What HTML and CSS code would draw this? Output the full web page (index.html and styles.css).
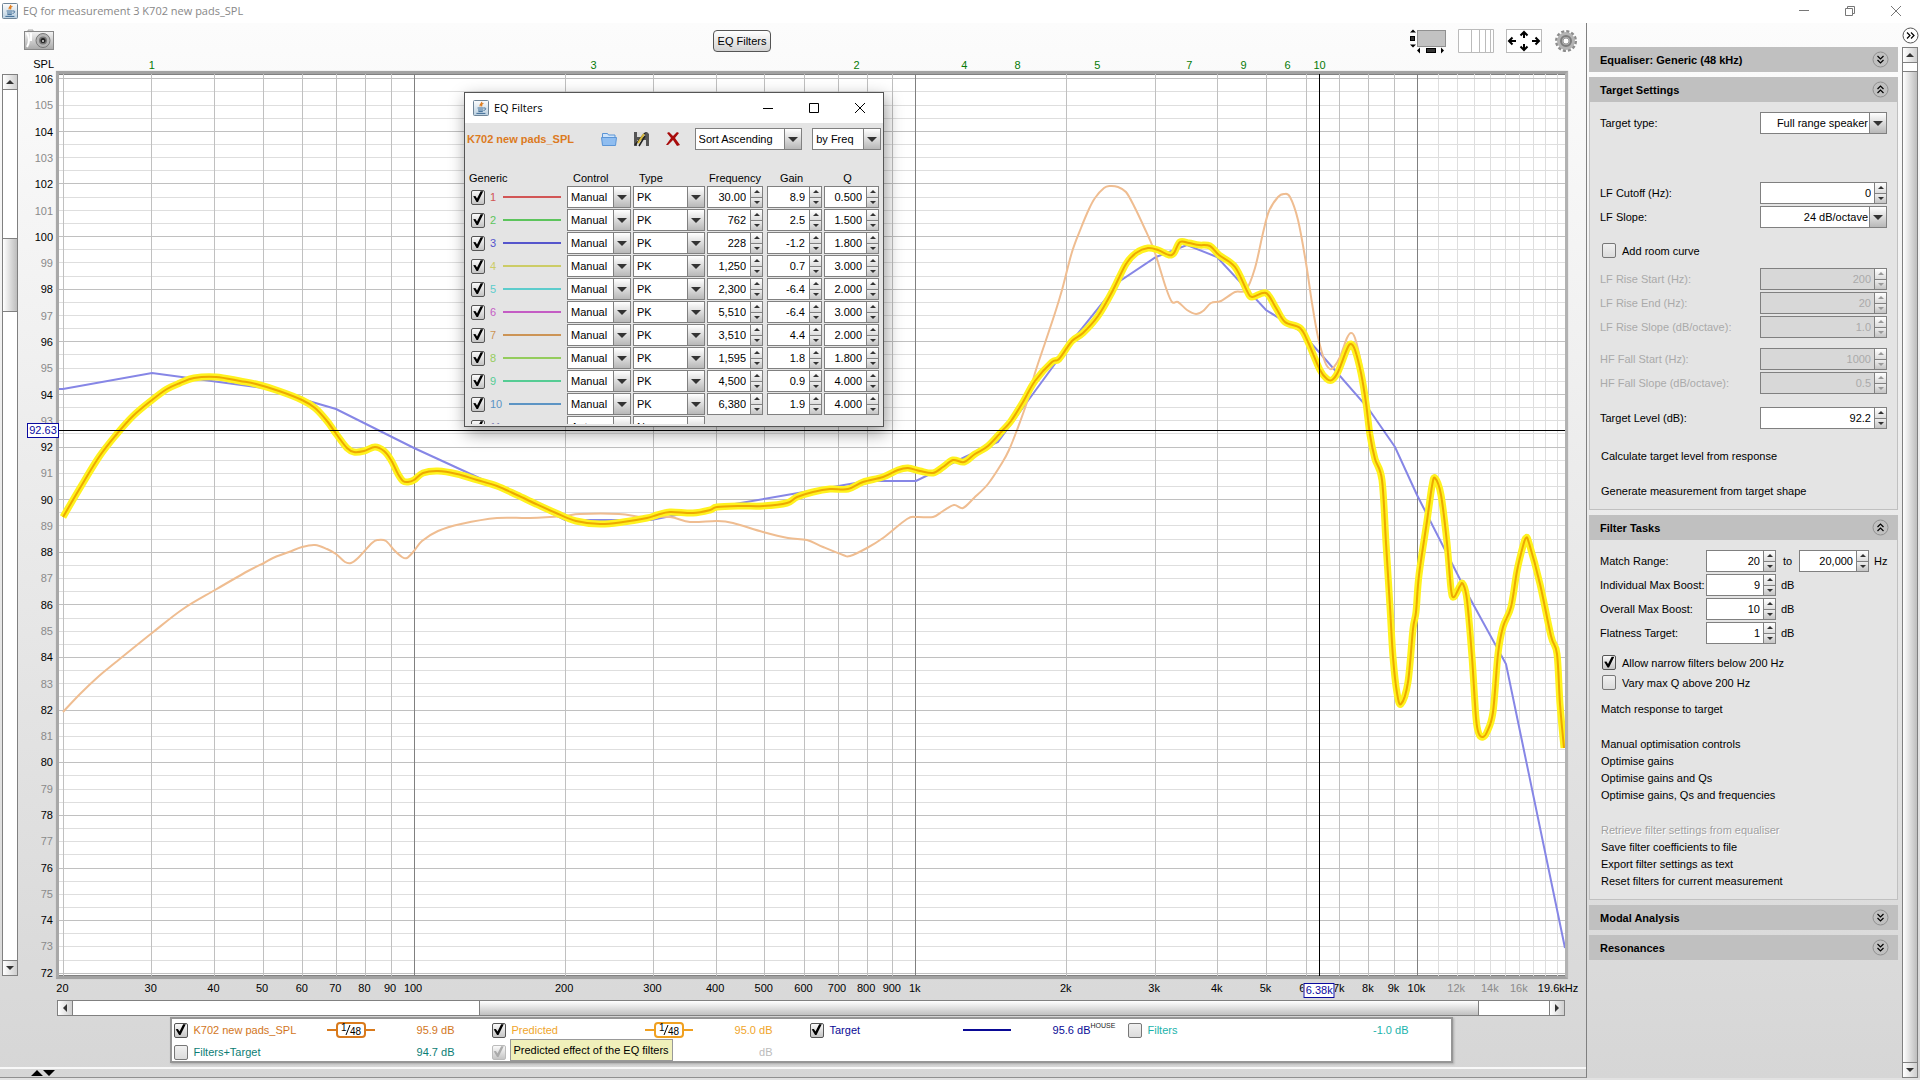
FILE: index.html
```html
<!DOCTYPE html>
<html lang="en">
<head>
<meta charset="utf-8">
<title>EQ for measurement 3 K702 new pads_SPL</title>
<link rel="stylesheet" href="styles.css">
</head>
<body>
<svg width="0" height="0" class="defs" aria-hidden="true">
  <defs>
    <linearGradient id="metal" x1="0" y1="0" x2="0" y2="1"><stop offset="0" stop-color="#f4f4f4"/><stop offset="1" stop-color="#a8a8a8"/></linearGradient>
    <linearGradient id="cupbg" x1="0" y1="0" x2="0" y2="1"><stop offset="0" stop-color="#fdfdfd"/><stop offset="1" stop-color="#b9cfe0"/></linearGradient>
    <symbol id="java" viewBox="0 0 16 16">
      <rect x=".5" y=".5" width="15" height="15" rx="1" fill="url(#cupbg)" stroke="#6f8598"/>
      <path d="M8.6 1.8c1 1.3-2.6 2.4-1.3 4.6M10.4 3.2c-2 1-2.2 1.8-1.4 3.2" fill="none" stroke="#e07b1a" stroke-width="1.2"/>
      <path d="M4.6 8h6.2M5 10h5.2M5.4 11.6h4.4M3.4 13.4h9M11 8c2.6-.5 2.2 2-.4 2.4" fill="none" stroke="#3f6c96"/>
    </symbol>
    <symbol id="down2" viewBox="0 0 17 17">
      <circle cx="8.5" cy="8.5" r="7.5" fill="none" stroke="#909090"/>
      <path d="M5.5 5l3 3 3-3M5.5 9l3 3 3-3" fill="none" stroke="#000" stroke-width="1.2"/>
    </symbol>
    <symbol id="up2" viewBox="0 0 17 17">
      <circle cx="8.5" cy="8.5" r="7.5" fill="none" stroke="#909090"/>
      <path d="M5.5 8l3-3 3 3M5.5 12l3-3 3 3" fill="none" stroke="#000" stroke-width="1.2"/>
    </symbol>
  </defs>
</svg>

<header class="titlebar">
  <svg class="app-icon" aria-hidden="true"><use href="#java"/></svg>
  <h1>EQ for measurement 3 K702 new pads_SPL</h1>
  <div class="window-buttons">
    <button type="button" aria-label="Minimise"><svg width="12" height="12"><path d="M1 5.5h10" stroke="#777"/></svg></button>
    <button type="button" aria-label="Restore"><svg width="12" height="12"><path d="M1.500 3.500h7v7h-7zM3.500 3.500v-2h7v7h-2" fill="none" stroke="#777"/></svg></button>
    <button type="button" aria-label="Close"><svg width="12" height="12"><path d="M1 1l10 10M11 1L1 11" stroke="#777"/></svg></button>
  </div>
</header>

<div class="workspace">
  <main class="graph-pane">
    <div class="toolbar">
      <button type="button" class="icon-button" aria-label="Capture graph">
        <svg width="32" height="24"><path d="M5 3V1h5v2" fill="#ddd" stroke="#aaa"/><rect x="1.500" y="2.500" width="29" height="18" fill="url(#metal)" stroke="#888"/><path d="M4 4q4 7 0 14M8 4v8" fill="none" stroke="#fff" stroke-width="2"/><circle cx="20" cy="11.500" r="7" fill="#b5b5b5" stroke="#777"/><circle cx="20" cy="11.500" r="4" fill="#777"/><circle cx="20" cy="11.500" r="2.500" fill="#222"/><circle cx="20" cy="12" r="1" fill="#ddd"/></svg>
      </button>
      <button type="button" class="eq-button">EQ Filters</button>
      <div class="view-buttons">
        <button type="button" class="icon-button" aria-label="Toggle scrollbars">
          <svg width="38" height="26"><rect x="8.500" y="2.500" width="28" height="16" fill="#c2c2c2" stroke="#909090"/><path d="M4 1.500l3 3H1zM4 19.500l3-3H1zM8 22.500l3-3v6zM35 22.500l-3-3v6z"/><rect x="1.500" y="8.500" width="4" height="4" fill="#333" stroke="#000"/><rect x="17.500" y="20.500" width="9" height="4" fill="#333" stroke="#000"/></svg>
        </button>
        <button type="button" class="icon-button" aria-label="Toggle frequency axis">
          <svg width="38" height="26"><path d="M1.500 1.500h35v23h-35zM14.500 2v23M22.500 2v23M28.500 2v23M33.500 2v23" fill="#fff" stroke="#bbb"/></svg>
        </button>
        <button type="button" class="icon-button" aria-label="Graph limits">
          <svg width="38" height="26"><rect x="1.500" y="1.500" width="35" height="23" fill="#fff" stroke="#bbb"/><path d="M19 10V4m-3.500 3.500L19 4l3.500 3.500M19 16v6m-3.500-3.500L19 22l3.500-3.500M11 13H4m3.500-3.500L4 13l3.500 3.500M27 13h7m-3.500-3.500L34 13l-3.500 3.500" fill="none" stroke="#000" stroke-width="2"/></svg>
        </button>
        <button type="button" class="icon-button" aria-label="Graph controls">
          <svg width="26" height="26"><circle cx="13" cy="13" r="9.500" fill="none" stroke="#8c8c8c" stroke-width="3" stroke-dasharray="3 1.970"/><circle cx="13" cy="13" r="6" fill="none" stroke="#b4b4b4" stroke-width="6"/><circle cx="13" cy="13" r="5" fill="none" stroke="#7d7d7d" stroke-width="2"/><circle cx="13" cy="13" r="3" fill="#fff" stroke="#999"/></svg>
        </button>
      </div>
    </div>

    <div class="graph">
      <div class="axis-name">SPL</div>
      <div class="filter-marks" id="filter-marks"></div>
      <div class="scroll scroll-v">
        <button type="button" class="arrow-up" aria-label="Scroll up"></button>
        <div class="rest rest-top"></div><div class="thumb thumb-v"></div><div class="rest"></div>
        <button type="button" class="arrow-down" aria-label="Scroll down"></button>
      </div>
      <div class="y-axis" id="y-axis"></div>
      <div class="plot">
        <svg id="chart" viewBox="59 74 1506 902" preserveAspectRatio="none" role="img" aria-label="SPL against frequency">
          <g id="grid"></g>
          <g id="curves"></g>
          <path class="cursor" d="M59 430.500H1565M1319.500 74V976"/>
        </svg>
        <output class="cursor-level">92.63</output>
        <output class="cursor-frequency" id="cursor-frequency">6.38k</output>
      </div>
      <div class="x-axis" id="x-axis"></div>
      <div class="scroll scroll-h">
        <button type="button" class="arrow-left" aria-label="Scroll left"></button>
        <div class="rest rest-left"></div><div class="thumb thumb-h"></div><div class="rest rest-right"></div>
        <button type="button" class="arrow-right" aria-label="Scroll right"></button>
      </div>
    </div>

    <div class="legend">
      <div class="trace orange"><input type="checkbox" id="t1" checked><label for="t1">K702 new pads_SPL</label><span class="smooth"><svg width="50" height="16"><path d="M1 8h10M39 8h10" stroke="#d97a1c" stroke-width="2"/><rect x="11" y="1" width="28" height="14" rx="3" fill="#fff" stroke="#d97a1c" stroke-width="2"/><path d="M20 13l4-10" stroke="#000"/><text x="15" y="9">1</text><text x="24" y="13">48</text></svg></span><output>95.9 dB</output></div>
      <div class="trace amber"><input type="checkbox" id="t2" checked><label for="t2">Predicted</label><span class="smooth"><svg width="50" height="16"><path d="M1 8h10M39 8h10" stroke="#f0a020" stroke-width="2"/><rect x="11" y="1" width="28" height="14" rx="3" fill="#fff" stroke="#f0a020" stroke-width="2"/><path d="M20 13l4-10" stroke="#000"/><text x="15" y="9">1</text><text x="24" y="13">48</text></svg></span><output>95.0 dB</output></div>
      <div class="trace navy"><input type="checkbox" id="t3" checked><label for="t3">Target</label><span class="smooth"><svg width="50" height="16"><path d="M1 8h48" stroke="#0a0a96" stroke-width="2"/></svg></span><output>95.6 dB</output><sup>HOUSE</sup></div>
      <div class="trace cyan"><input type="checkbox" id="t4"><label for="t4">Filters</label><output>-1.0 dB</output></div>
      <div class="trace teal"><input type="checkbox" id="t5"><label for="t5">Filters+Target</label><output>94.7 dB</output></div>
      <div class="trace off"><input type="checkbox" id="t6" checked disabled aria-label="Unused trace"><output>dB</output><div class="tip" role="tooltip">Predicted effect of the EQ filters</div></div>
    </div>
    <div class="splitter"><button type="button" aria-label="Collapse or expand"><svg width="24" height="8"><path d="M0 7l6-6 6 6zM12 1l6 6 6-6z"/></svg></button></div>
  </main>

  <aside class="sidebar">
    <button type="button" class="hide-side" aria-label="Hide panel"><svg width="17" height="17"><circle cx="8.500" cy="8.500" r="7.500" fill="#fff" stroke="#555"/><path d="M5 5.500l3 3-3 3M9 5.500l3 3-3 3" fill="none" stroke="#000" stroke-width="1.200"/></svg></button>
    <div class="panels">
      <section><button type="button" class="head">Equaliser: Generic (48 kHz)<svg><use href="#down2"/></svg></button></section>
      <section>
        <button type="button" class="head">Target Settings<svg><use href="#up2"/></svg></button>
        <div class="panel-body">
          <div class="group"><div class="field"><label for="type">Target type:</label><span class="combo"><select id="type"><option>Full range speaker</option></select></span></div></div>
          <div class="group gap-type">
            <div class="field"><label for="cut">LF Cutoff (Hz):</label><span class="spin"><input id="cut" value="0"></span></div>
            <div class="field"><label for="slope">LF Slope:</label><span class="combo"><select id="slope"><option>24 dB/octave</option></select></span></div>
          </div>
          <div class="check gap-l"><input type="checkbox" id="room"><label for="room">Add room curve</label></div>
          <div class="group gap-m">
            <div class="field off"><label for="rs">LF Rise Start (Hz):</label><span class="spin"><input id="rs" value="200" disabled></span></div>
            <div class="field off"><label for="re">LF Rise End (Hz):</label><span class="spin"><input id="re" value="20" disabled></span></div>
            <div class="field off"><label for="rl">LF Rise Slope (dB/octave):</label><span class="spin"><input id="rl" value="1.0" disabled></span></div>
          </div>
          <div class="group gap-m">
            <div class="field off"><label for="hs">HF Fall Start (Hz):</label><span class="spin"><input id="hs" value="1000" disabled></span></div>
            <div class="field off"><label for="hl">HF Fall Slope (dB/octave):</label><span class="spin"><input id="hl" value="0.5" disabled></span></div>
          </div>
          <div class="group gap-level"><div class="field"><label for="lvl">Target Level (dB):</label><span class="spin"><input id="lvl" value="92.2"></span></div></div>
          <div class="tasks gap-xl"><button type="button">Calculate target level from response</button></div>
          <div class="tasks gap-xl"><button type="button">Generate measurement from target shape</button></div>
        </div>
      </section>
      <section>
        <button type="button" class="head">Filter Tasks<svg><use href="#up2"/></svg></button>
        <div class="panel-body">
          <div class="group ranges">
            <div class="field"><label for="r1">Match Range:</label><span class="spin"><input id="r1" value="20"></span><label class="unit between" for="r2">to</label><span class="spin"><input id="r2" value="20,000"></span><span class="unit">Hz</span></div>
            <div class="field"><label for="imb">Individual Max Boost:</label><span class="spin"><input id="imb" value="9"></span><span class="unit">dB</span></div>
            <div class="field"><label for="omb">Overall Max Boost:</label><span class="spin"><input id="omb" value="10"></span><span class="unit">dB</span></div>
            <div class="field"><label for="ft">Flatness Target:</label><span class="spin"><input id="ft" value="1"></span><span class="unit">dB</span></div>
          </div>
          <div class="check gap-m"><input type="checkbox" id="narrow" checked><label for="narrow">Allow narrow filters below 200 Hz</label></div>
          <div class="check gap-s"><input type="checkbox" id="vary"><label for="vary">Vary max Q above 200 Hz</label></div>
          <div class="tasks gap-m"><button type="button">Match response to target</button></div>
          <div class="tasks gap-xl">
            <button type="button">Manual optimisation controls</button>
            <button type="button">Optimise gains</button>
            <button type="button">Optimise gains and Qs</button>
            <button type="button">Optimise gains, Qs and frequencies</button>
          </div>
          <div class="tasks gap-xl">
            <button type="button" disabled>Retrieve filter settings from equaliser</button>
            <button type="button">Save filter coefficients to file</button>
            <button type="button">Export filter settings as text</button>
            <button type="button">Reset filters for current measurement</button>
          </div>
        </div>
      </section>
      <section><button type="button" class="head">Modal Analysis<svg><use href="#down2"/></svg></button></section>
      <section><button type="button" class="head">Resonances<svg><use href="#down2"/></svg></button></section>
    </div>
    <div class="scroll scroll-v side-scroll">
      <button type="button" class="arrow-up" aria-label="Scroll panel up"></button>
      <div class="rest rest-side"></div><div class="thumb thumb-side"></div>
      <button type="button" class="arrow-down" aria-label="Scroll panel down"></button>
    </div>
  </aside>
</div>

<section class="dialog" role="dialog" aria-labelledby="dialog-title">
  <header>
    <svg class="app-icon" aria-hidden="true"><use href="#java"/></svg>
    <h2 id="dialog-title">EQ Filters</h2>
    <div class="window-buttons">
      <button type="button" aria-label="Minimise dialog"><svg width="12" height="12"><path d="M1 6.500h10" stroke="#000"/></svg></button>
      <button type="button" aria-label="Maximise dialog"><svg width="12" height="12"><path d="M1.500 1.500h9v9h-9z" fill="none" stroke="#000"/></svg></button>
      <button type="button" aria-label="Close dialog"><svg width="12" height="12"><path d="M1 1l10 10M11 1L1 11" stroke="#000"/></svg></button>
    </div>
  </header>
  <div class="dialog-tools">
    <strong>K702 new pads_SPL</strong>
    <button type="button" class="icon-button" aria-label="Open"><svg width="16" height="16"><path d="M1.500 13V2.500h5l1 1.500h6.500v4" fill="#cfe4fa" stroke="#5b95d6"/><path d="M.5 6.500h15l-1 8h-13z" fill="#8fbdf0" stroke="#5b95d6"/></svg></button>
    <button type="button" class="icon-button" aria-label="Save"><svg width="16" height="16"><path d="M1 1h13l2 2v12H1z" fill="#555"/><path d="M4 1h8v5H4zM4 9h9v6H4z" fill="#ddd"/><path d="M2 14L12 2M6 15l6-10" stroke="#222" stroke-width="1.500"/><path d="M5 12l6-9" stroke="#d8b93a" stroke-width="2"/></svg></button>
    <button type="button" class="icon-button" aria-label="Delete"><svg width="16" height="16"><path d="M2 2l4 5-5 7 2 0 5-5 4 6 3-1-5-7 4-5-2-1-4 4-4-4z" fill="#a80c0c"/></svg></button>
    <span class="combo sort"><select aria-label="Sort order"><option>Sort Ascending</option></select></span>
    <span class="combo by"><select aria-label="Sort by"><option>by Freq</option></select></span>
  </div>
  <div class="filter-list">
    <table class="filters">
      <thead><tr><th>Generic</th><th>Control</th><th>Type</th><th>Frequency</th><th>Gain</th><th>Q</th></tr></thead>
      <tbody id="filter-rows"></tbody>
    </table>
  </div>
</section>
<script src="app.js"></script>
</body>
</html>
```
FILE: styles.css
```css
* { box-sizing: border-box; }
body { margin: 0; height: 100vh; min-height: 1080px; display: flex; flex-direction: column; background: #e2e2e2; color: #000; font: 11px/14px "Liberation Sans", Arial, sans-serif; position: relative; }
button, input, select { font: inherit; color: inherit; margin: 0; border-radius: 0; }
button { padding: 0; border: 0; background: none; }
.defs { position: absolute; }

.titlebar { flex: none; height: 23px; background: #fff; display: flex; align-items: center; padding: 0 18px 1px 2px; }
.titlebar h1, .dialog h2 { margin: 0 0 0 5px; font: 11px/16px "Open Sans", "Noto Sans", sans-serif; color: #888; }
.app-icon { width: 16px; height: 16px; }
.window-buttons { margin-left: auto; display: flex; gap: 34px; }
.window-buttons svg { display: block; }

.workspace { flex: 1; min-height: 0; margin-bottom: 2px; display: flex; background: linear-gradient(#fcfcfc, #d6d6d6); }
.graph-pane { flex: 1; min-width: 0; display: flex; flex-direction: column; border-right: 1px solid #808080; border-bottom: 1px solid #909090; }
.toolbar { height: 33px; display: grid; grid-template-columns: 1fr auto 1fr; align-items: center; padding: 3px 7px 0 23px; }
.toolbar > .icon-button { justify-self: start; }
.icon-button svg { display: block; }
.eq-button { width: 58px; height: 22px; border: 1px solid #555; border-radius: 4px; background: linear-gradient(#fff, #d2d2d2); margin-right: 118px; }
.view-buttons { display: flex; gap: 10px; justify-content: flex-end; align-items: center; }

.graph { flex: 1; min-height: 0; display: grid; grid-template: 15px minmax(0, 1fr) 21px 16px / 16px 38px minmax(0, 1fr); padding: 0 18px 0 2px; }
.axis-name { grid-area: 1 / 1 / 2 / 3; text-align: right; padding: 1px 2px 0 0; }
.filter-marks, .x-axis { position: relative; grid-column: 3; margin: 0 3px; }
.filter-marks { padding: 1px 0; color: #077a07; }
.x-axis { grid-row: 3; margin: 0 4px 0 2px; }
.filter-marks span, .x-axis span { position: absolute; transform: translateX(-50%); white-space: nowrap; }
.filter-marks span { top: 2px; }
.x-axis span { top: 2px; }
.y-axis { grid-area: 2 / 2; margin: -5px 3px -7px 0; display: flex; flex-direction: column; }
.y-axis span { flex: 1; display: flex; align-items: center; justify-content: flex-end; }
.minor { color: #8a8a8a; }
.plot { grid-area: 2 / 3; position: relative; border: 3px solid; border-color: #a2a2a2 #b2b2b2 #a2a2a2 #a8a8a8; background: #fff; box-shadow: inset 0 1px #808080, inset 0 -1px #808080, 0 0 1px #bbb; }
.plot > svg { display: block; width: 100%; height: 100%; position: absolute; }
.plot path, .plot line { vector-effect: non-scaling-stroke; fill: none; }
.plot line { shape-rendering: crispEdges; stroke: #dedede; }
.plot .main { stroke: #c0c0c0; }
.plot .decade { stroke: #808080; }
.cursor { stroke: #000; shape-rendering: crispEdges; }
.curve-spl { stroke: #efbd91; stroke-width: 2px; }
.curve-target { stroke: #8686e6; stroke-width: 2px; }
.curve-halo { stroke: #fff21e; stroke-width: 7px; stroke-linejoin: round; }
.curve-predicted { stroke: #eda800; stroke-width: 2px; stroke-linejoin: round; }
.cursor-level, .cursor-frequency { position: absolute; z-index: 1; height: 15px; line-height: 13px; border: 1px solid #0a0aa0; background: #fff; color: #0a0aa0; text-align: center; }
.cursor-level { width: 32px; right: 100%; top: calc(39.5% - 7px); }
.cursor-frequency { width: 31px; bottom: -22px; transform: translateX(-50%); }

.scroll { display: flex; border: 1px solid #808080; background: #fff; }
.scroll-v { flex-direction: column; grid-area: 2 / 1; margin: 3px 0; }
.scroll-h { grid-area: 4 / 3; margin: 0 3px 0 1px; }
.scroll button { flex: none; width: 14px; height: 14px; background: linear-gradient(90deg, #fff, #cfcfcf); display: flex; align-items: center; justify-content: center; }
.scroll button::before { content: ""; width: 8px; height: 8px; background: #333; }
.arrow-up::before { clip-path: polygon(0 75%, 50% 25%, 100% 75%); }
.arrow-down::before { clip-path: polygon(0 25%, 50% 75%, 100% 25%); }
.arrow-left::before { clip-path: polygon(75% 0, 25% 50%, 75% 100%); }
.arrow-right::before { clip-path: polygon(25% 0, 75% 50%, 25% 100%); }
.rest { flex: 651; background: #fff; }
.rest-top { flex: 149; }
.thumb-v { flex: 72; }
.scroll-v .rest, .scroll-v .thumb { border-top: 1px solid #808080; }
.scroll-v .arrow-down { border-top: 1px solid #808080; height: 15px; }
.thumb { background: linear-gradient(90deg, #fff, #bdbdbd); }
.thumb-h { flex: 999; background: linear-gradient(#fff, #c0c0c0); }
.rest-left { flex: 407; }
.rest-right { flex: 70; }
.scroll-h > :not(:first-child) { border-left: 1px solid #808080; }
.scroll-h .arrow-right { width: 15px; }

.legend { align-self: center; margin: 1px 0 4px 36px; width: 1283px; height: 46px; border: 2px solid #969696; box-shadow: 1px 1px 2px #aaa; background: #fff; padding: 0 0 0 2px; display: grid; grid-template: 22px 20px / repeat(4, 318px); }
.trace { position: relative; display: flex; align-items: center; width: 281px; height: 21px; padding-top: 1px; }
.trace label { margin-left: 6px; flex: 1; }
.trace .smooth { width: 50px; margin-right: 29px; }
.trace output { width: 50px; text-align: right; }
.trace.off output { margin-left: auto; }
.smooth svg { display: block; }
.smooth text { font-size: 10px; fill: #000; }
.trace sup { position: absolute; left: 100%; top: 3px; font-size: 7px; line-height: 8px; color: #222; }
.orange { color: #d2761c; } .amber { color: #f0a52a; } .navy { color: #0a0a96; } .cyan { color: #1ab3ab; } .teal { color: #0b7d74; } .trace.off { color: #bbb; }
.tip { position: absolute; left: 18px; top: -2px; width: 163px; height: 22px; padding: 3px 0 0 3px; border: 1px solid #999; background: #f0f0ba; color: #000; white-space: nowrap; }
.splitter { height: 10px; border-top: 2px solid #f8f8f8; padding-left: 31px; }
.splitter svg, .splitter button { display: block; }

input[type="checkbox"] { appearance: none; flex: none; width: 14px; height: 15px; border: 1px solid #555; border-radius: 2px; background: linear-gradient(#fafafa, #c4c4c4); }
input[type="checkbox"]:not(:checked) { border-color: #777; background: linear-gradient(#f0f0f0, #dcdcdc); }
input[type="checkbox"]:checked::before { content: ""; display: block; width: 12px; height: 13px; background: #000; clip-path: polygon(10% 45%, 28% 42%, 42% 62%, 72% 5%, 94% 5%, 50% 88%, 38% 88%); }
input[type="checkbox"]:disabled { border-color: #bbb; }
input[type="checkbox"]:disabled::before { background: #aaa !important; }

.combo { position: relative; display: flex; height: 22px; }
.combo select { appearance: none; width: 100%; height: 100%; border: 1px solid #808080; background: #fff; padding: 0 19px 0 3px; outline: 0; }
.combo::before { content: ""; position: absolute; inset: 1px 1px 1px auto; width: 16px; border-left: 1px solid #808080; background: linear-gradient(#fff, #b8b8b8); pointer-events: none; }
.combo::after { content: ""; position: absolute; right: 4px; top: 9px; border: solid transparent; border-width: 5px 5px 0; border-top-color: #333; pointer-events: none; }
.spin { flex: none; display: flex; height: 22px; border: 1px solid #808080; background: #fff; }
.spin input { flex: 1; width: 0; min-width: 0; border: 0; outline: 0; padding: 0 3px 1px 0; text-align: right; background: none; }
.spin span { flex: none; width: 12px; border-left: 1px solid #808080; display: flex; flex-direction: column; }
.spin button { flex: 1; background: linear-gradient(#fff, #ddd); display: flex; align-items: center; justify-content: center; }
.spin button + button { border-top: 1px solid #808080; background: linear-gradient(#eee, #c4c4c4); }
.spin button::before { content: ""; border: solid transparent; border-width: 0 3px 3px; border-bottom-color: #333; }
.spin button + button::before { border-width: 3px 3px 0; border-top-color: #333; }

.sidebar { flex: none; width: 333px; display: grid; grid-template: 24px minmax(0, 1fr) / 309px 16px; column-gap: 4px; padding: 0 2px; }
.hide-side { grid-column: 2; align-self: center; }
.hide-side svg { display: block; }
.panels { grid-area: 2 / 1; display: flex; flex-direction: column; gap: 5px; }
.side-scroll { grid-area: 2 / 2; margin: 0; }
.rest-side { flex: 8; } .thumb-side { flex: 992; }
.head { display: flex; align-items: center; justify-content: space-between; width: 100%; height: 25px; padding: 0 9px 0 11px; background: #c0c0c0; font-weight: bold; }
.head svg { width: 17px; height: 17px; }
.panel-body { border: 1px solid #c0c0c0; border-top: 0; background: #e4e4e4; padding: 10px; }
.group { display: flex; flex-direction: column; gap: 2px; }
.gap-type { margin-top: 48px; } .gap-s { margin-top: 5px; } .gap-m { margin-top: 10px; } .gap-level { margin-top: 13px; } .gap-l { margin-top: 15px; } .gap-xl { margin-top: 18px; }
.field { display: flex; align-items: center; height: 22px; }
.field label { flex: 1; }
.field .combo, .field .spin { width: 127px; }
.field select { text-align-last: right; padding-right: 18px; }
.ranges { padding-bottom: 1px; }
.ranges .field label:first-child { flex: none; width: 106px; }
.ranges .field .spin { width: 70px; }
.field .unit { flex: none; padding-left: 5px; }
.field .between { width: 23px; padding-left: 7px; }
.field.off { color: #aaa; }
.off .spin { background: #d8d8d8; }
.off .spin button::before { border-bottom-color: #999; }
.off .spin button + button::before { border-top-color: #999; border-bottom-color: transparent; }
.check { display: flex; align-items: center; height: 15px; padding-left: 2px; }
.check label { margin-left: 6px; }
.tasks { display: flex; flex-direction: column; align-items: flex-start; padding-left: 1px; }
.tasks button { height: 17px; }
.tasks button:disabled { color: #a0a0a0; text-shadow: 1px 1px #fff; }

.dialog { position: absolute; left: 464px; top: 92px; width: 420px; height: 335px; border: 1px solid #555; background: #e4e4e4; box-shadow: 2px 6px 16px rgb(0 0 0 / 40%); display: flex; flex-direction: column; padding-bottom: 2px; }
.dialog header { flex: none; height: 30px; background: #fff; display: flex; align-items: center; padding: 0 17px 0 8px; }
.dialog h2 { color: #000; }
.dialog-tools { flex: none; display: flex; align-items: center; height: 32px; padding: 0 2px; }
.dialog-tools strong { color: #dc7a1e; width: 134px; white-space: nowrap; }
.dialog-tools .icon-button { margin-right: 16px; }
.dialog-tools .sort { width: 108px; margin-left: -2px; }
.dialog-tools .by { width: 69px; margin-left: 10px; }
.filter-list { flex: 1; min-height: 0; overflow: hidden; padding-top: 14px; }
.filters { border-collapse: collapse; table-layout: fixed; width: 418px; }
.filters th { font-weight: normal; height: 17px; padding: 0; text-align: center; }
.filters th:nth-child(1) { width: 102px; text-align: left; padding-left: 4px; }
.filters th:nth-child(2) { width: 66px; text-align: left; padding-left: 6px; }
.filters th:nth-child(3) { width: 74px; text-align: left; padding-left: 6px; }
.filters th:nth-child(4) { width: 60px; padding-right: 4px; white-space: nowrap; }
.filters th:nth-child(5) { width: 57px; padding-right: 8px; }
.filters th:nth-child(6) { padding-right: 12px; }
.filters td { padding: 0 2px 1px 0; height: 23px; }
.filters td:nth-child(4) { padding-right: 4px; }
.filters td:last-child { padding-right: 4px; }
.filter-id { display: flex; align-items: center; padding: 0 4px 0 6px; }
.filter-id label { margin: 0 7px 0 5px; }
.filter-id i { flex: 1; height: 2px; background: currentColor; }
.filters .spin input { padding-right: 4px; }
```
FILE: app.js
```js
const LEFT = 59, WIDTH = 1506;
const xOf = hz => 63.4 + 501.7 * Math.log10(hz / 20);
const yOf = db => 78.7 + 26.31 * (106 - db);
const percent = hz => ((xOf(hz) - LEFT) / WIDTH * 100) + '%';
const byId = id => document.getElementById(id);

// number, colour, frequency, gain, Q
const filters = [
  [1, '#d25555', '30.00', '8.9', '0.500'], [2, '#5cc45c', '762', '2.5', '1.500'],
  [3, '#5555cc', '228', '-1.2', '1.800'], [4, '#cccc66', '1,250', '0.7', '3.000'],
  [5, '#5ccccc', '2,300', '-6.4', '2.000'], [6, '#c45cc4', '5,510', '-6.4', '3.000'],
  [7, '#cc9455', '3,510', '4.4', '2.000'], [8, '#94cc5c', '1,595', '1.8', '1.800'],
  [9, '#55cc94', '4,500', '0.9', '4.000'], [10, '#5c94c4', '6,380', '1.9', '4.000']
];
const combo = (text, name) => `<span class="combo"><select aria-label="${name}"><option>${text}</option></select></span>`;
const spin = (value, name) => `<span class="spin"><input value="${value}" aria-label="${name}"></span>`;
const idCell = (n, colour) => `<td><div class="filter-id" style="color:${colour}"><input type="checkbox" id="f${n}" checked><label for="f${n}">${n}</label><i></i></div></td>`;
byId('filter-rows').innerHTML = filters.map(([n, c, f, g, q]) =>
  `<tr>${idCell(n, c)}<td>${combo('Manual', 'Control ' + n)}</td><td>${combo('PK', 'Type ' + n)}</td><td>${spin(f, 'Frequency ' + n)}</td><td>${spin(g, 'Gain ' + n)}</td><td>${spin(q, 'Q ' + n)}</td></tr>`
).join('') + `<tr>${idCell(11, '#8080b0')}<td>${combo('Auto', 'Control 11')}</td><td>${combo('None', 'Type 11')}</td><td></td><td></td><td></td></tr>`;

document.querySelectorAll('.spin').forEach(s => {
  const off = s.querySelector('input').disabled ? ' disabled' : '';
  s.insertAdjacentHTML('beforeend', `<span><button type="button" aria-label="Increase"${off}></button><button type="button" aria-label="Decrease"${off}></button></span>`);
});

byId('filter-marks').innerHTML = filters.map(([n, , f]) => `<span style="left:${percent(+f.replace(',', ''))}">${n}</span>`).join('');
let levels = '';
for (let db = 106; db >= 72; db--) levels += `<span class="${db % 2 ? 'minor' : ''}">${db}</span>`;
byId('y-axis').innerHTML = levels;

const ticks = [];
for (const decade of [10, 100, 1000]) for (let k = 1; k < 10; k++) if (decade * k >= 20) ticks.push(decade * k);
ticks.push(10000);
const named = hz => hz < 1000 ? hz : hz / 1000 + 'k';
byId('x-axis').innerHTML = ticks.map(hz => `<span style="left:${percent(hz)}">${named(hz)}</span>`).join('') +
  [12000, 14000, 16000].map(hz => `<span class="minor" style="left:${percent(hz)}">${named(hz)}</span>`).join('') +
  `<span style="left:${percent(19150)}">19.6kHz</span>`;
byId('cursor-frequency').style.left = percent(6370);

let grid = '';
const across = (y, c) => `<line class="${c}" x1="59" x2="1565" y1="${y}" y2="${y}"/>`;
const down = (x, c) => `<line class="${c}" x1="${x}" x2="${x}" y1="74" y2="976"/>`;
for (let k = 11; k < 20; k++) grid += down(xOf(k * 1000), '');
for (let half = 144; half <= 212; half++) if (half % 4) grid += across(yOf(half / 2), '');
for (let db = 72; db <= 106; db += 2) grid += across(yOf(db), 'main');
ticks.forEach(hz => { grid += down(xOf(hz), [100, 1000, 10000].includes(hz) ? 'decade' : 'main'); });
byId('grid').innerHTML = grid;

const spl = '63,712 80,694 99,676 116,662 152,633 183,609 215,590 248,571 264,563 273,558 289,552 302,547 315,545 327,549 336,554 345,562 351,563 358,558 372,543 378,540 386,541 394,550 402,557 407,558 414,551 422,541 438,531 461,524 497,518 530,518 564,516 580,514 619,514 643,517 670,517 690,522 717,521 733,523 763,532 788,538 807,540 823,547 843,555 850,556 867,548 883,538 907,519 917,517 933,517 943,511 954,505 963,508 974,498 988,484 1002,463 1009,450 1017,430 1027,402 1035,373 1045,343 1055,313 1062,290 1072,252 1081,228 1089,209 1095,198 1104,188 1110,186 1118,187 1126,192 1134,206 1144,227 1154,250 1166,288 1172,302 1178,302 1187,310 1196,314 1203,311 1211,303 1221,301 1235,292 1246,290 1255,268 1263,233 1269,211 1278,197 1284,194 1290,197 1298,220 1306,263 1312,303 1318,337 1325,362 1330,369 1334,367 1340,357 1347,338 1351,333 1355,338 1361,363 1367,400';
const target = '59,389 63,389 152,373 264,388 336,409 414,448 501,488 565,520 651,520 717,507 804,492 867,481 916,481 965,457 998,442 1027,402 1071,342 1120,281 1156,257 1187,245 1217,257 1266,310 1300,331 1319,352 1368,408 1395,447 1417,495 1467,593 1506,664 1565,948';
const predicted = '63,517 80,488 99,457 116,435 133,416 152,400 167,389 180,383 194,378 216,377 240,381 256,384 279,391 302,400 315,408 327,421 337,435 347,448 354,452 364,451 375,447 384,451 391,460 398,474 403,481 408,482 414,480 423,473 438,471 457,474 477,480 497,486 517,495 536,504 556,513 576,521 600,524 623,522 647,518 657,515 670,512 693,513 710,510 717,507 740,506 763,506 787,503 797,497 813,492 830,489 848,489 863,482 883,477 898,470 908,468 920,471 933,473 943,467 953,460 964,462 975,454 988,446 1002,431 1011,421 1023,402 1035,381 1052,362 1059,359 1072,341 1083,333 1098,316 1112,292 1126,264 1136,253 1148,248 1158,250 1169,255 1174,253 1180,242 1189,243 1199,245 1210,246 1219,255 1235,267 1247,291 1252,297 1266,293 1276,308 1285,322 1300,328 1308,342 1320,370 1327,379 1332,380 1338,372 1347,349 1351,344 1355,350 1361,373 1366,403 1370,435 1375,459 1382,480 1386,543 1390,607 1393,657 1397,693 1401,704 1408,682 1413,629 1416,612 1419,575 1427,521 1432,486 1435,478 1441,495 1447,543 1451,589 1454,597 1460,586 1463,584 1467,600 1472,657 1476,718 1479,734 1483,737 1487,732 1493,712 1498,654 1503,627 1511,607 1517,571 1523,546 1526,538 1529,543 1540,584 1551,636 1557,654 1560,704 1564,748';

const parse = text => text.split(' ').map(p => p.split(',').map(Number));
const straight = pts => 'M' + pts.map(p => p.join(' ')).join('L');
// Catmull-Rom spline written as cubic segments
function smooth(pts) {
  let d = 'M' + pts[0].join(' ');
  for (let i = 0; i < pts.length - 1; i++) {
    const a = pts[i - 1] || pts[i], b = pts[i], c = pts[i + 1], e = pts[i + 2] || c;
    d += `C${b[0] + (c[0] - a[0]) / 6} ${b[1] + (c[1] - a[1]) / 6} ${c[0] - (e[0] - b[0]) / 6} ${c[1] - (e[1] - b[1]) / 6} ${c[0]} ${c[1]}`;
  }
  return d;
}
const curve = (name, d) => `<path class="${name}" d="${d}"/>`;
const predictedPath = smooth(parse(predicted));
byId('curves').innerHTML = curve('curve-target', straight(parse(target))) + curve('curve-spl', smooth(parse(spl))) +
  curve('curve-halo', predictedPath) + curve('curve-predicted', predictedPath);
```
